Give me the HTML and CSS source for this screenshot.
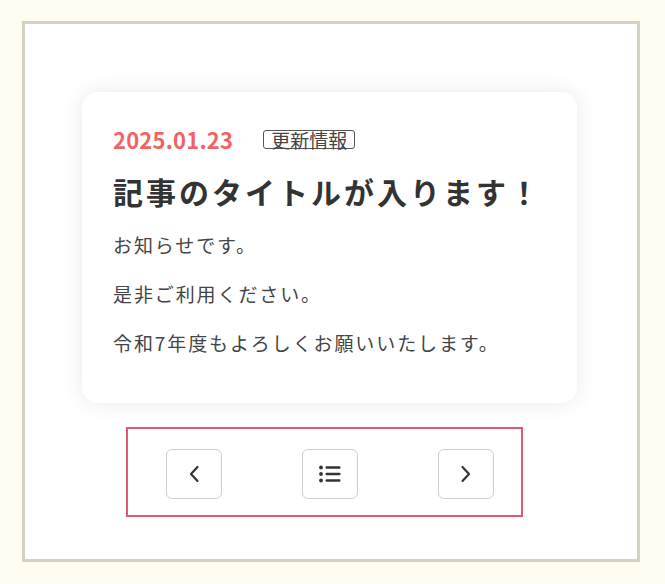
FILE: index.html
```html
<!DOCTYPE html>
<html lang="ja">
<head>
    <meta charset="UTF-8">
    <meta name="viewport" content="width=device-width, initial-scale=1.0">
    <title>お知らせ</title>
    <link rel="stylesheet" href="styles.css">
</head>
<body>
    <div class="frame">
        <!-- News card -->
        <article class="news-card">
            <div class="news-meta">
                <span class="news-date">2025.01.23</span>
                <span class="news-tag">更新情報</span>
            </div>
            <h1 class="news-title">記事のタイトルが入ります！</h1>
            <p class="news-text">お知らせです。</p>
            <p class="news-text">是非ご利用ください。</p>
            <p class="news-text">令和7年度もよろしくお願いいたします。</p>
        </article>

        <!-- Pager -->
        <nav class="pager">
            <button class="pager-button" type="button" aria-label="前へ">
                <svg width="12" height="18" viewBox="0 0 12 18">
                    <path d="M9.5 2 L3 9 L9.5 16" fill="none" stroke="#333" stroke-width="2.2" stroke-linecap="round" stroke-linejoin="round"/>
                </svg>
            </button>
            <button class="pager-button" type="button" aria-label="一覧">
                <svg width="24" height="18" viewBox="0 0 24 18">
                    <circle cx="3" cy="2.5" r="1.9" fill="#333"/>
                    <circle cx="3" cy="9" r="1.9" fill="#333"/>
                    <circle cx="3" cy="15.5" r="1.9" fill="#333"/>
                    <rect x="7.5" y="1.3" width="15" height="2.5" rx="1" fill="#333"/>
                    <rect x="7.5" y="7.8" width="15" height="2.5" rx="1" fill="#333"/>
                    <rect x="7.5" y="14.3" width="15" height="2.5" rx="1" fill="#333"/>
                </svg>
            </button>
            <button class="pager-button" type="button" aria-label="次へ">
                <svg width="12" height="18" viewBox="0 0 12 18">
                    <path d="M2.5 2 L9 9 L2.5 16" fill="none" stroke="#333" stroke-width="2.2" stroke-linecap="round" stroke-linejoin="round"/>
                </svg>
            </button>
        </nav>
    </div>
</body>
</html>
```

FILE: styles.css
```css
* {
    margin: 0;
    padding: 0;
    box-sizing: border-box;
}

body {
    background-color: #fffcf2;
    color: #333333;
    font-family: "Noto Sans CJK JP", "Noto Sans", sans-serif;
    padding: 21px 0 0 22px;
}

.frame {
    width: 618px;
    height: 541px;
    background-color: #ffffff;
    border: 3px solid #d6d2c2;
    padding: 68px 0 0 57px;
}

/* News card */
.news-card {
    width: 495px;
    height: 311px;
    background-color: #ffffff;
    border-radius: 16px;
    box-shadow: 0 0 22px rgba(0, 0, 0, 0.09);
    padding: 32px 31px 0 31px;
}

.news-meta {
    display: flex;
    align-items: center;
    gap: 30px;
    height: 30px;
}

.news-date {
    color: #f36262;
    font-size: 22px;
    font-weight: 700;
    letter-spacing: 0.2px;
    line-height: 30px;
}

.news-tag {
    border: 1px solid #555555;
    border-radius: 3px;
    color: #444444;
    font-size: 19px;
    line-height: 17px;
    padding: 0 7px;
    height: 19px;
}

.news-title {
    font-size: 30px;
    font-weight: 700;
    letter-spacing: 3px;
    line-height: 44px;
    margin: 15px 0 17px 0;
    color: #333333;
    white-space: nowrap;
}

.news-text {
    font-size: 19px;
    letter-spacing: 0.1em;
    line-height: 30px;
    color: #444444;
    margin-bottom: 19px;
    white-space: nowrap;
}

/* Pager */
.pager {
    display: flex;
    gap: 80px;
    width: 397px;
    height: 90px;
    margin: 24px 0 0 44px;
    padding: 20px 27px 16px 38px;
    border: 2px solid #e05a6e;
}

.pager-button {
    width: 56px;
    height: 50px;
    display: flex;
    align-items: center;
    justify-content: center;
    background-color: #ffffff;
    border: 1px solid #cfcfcf;
    border-radius: 6px;
    cursor: pointer;
}
```
